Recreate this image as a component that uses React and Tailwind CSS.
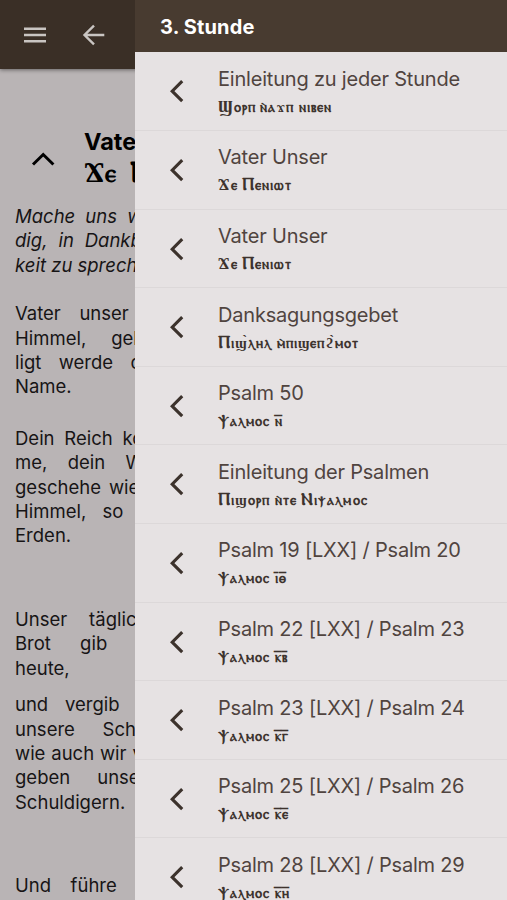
const prayers = [
  { title: "Einleitung zu jeder Stunde", coptic: "Ϣⲟⲣⲡ ⲛ̀ⲁϫⲡ ⲛⲓⲃⲉⲛ" },
  { title: "Vater Unser", coptic: "Ϫⲉ Ⲡⲉⲛⲓⲱⲧ" },
  { title: "Vater Unser", coptic: "Ϫⲉ Ⲡⲉⲛⲓⲱⲧ" },
  { title: "Danksagungsgebet", coptic: "Ⲡⲓϣ̀ⲗⲏⲗ ⲙ̀ⲡⲓϣⲉⲡϩ̀ⲙⲟⲧ" },
  { title: "Psalm 50", coptic: "Ⲯⲁⲗⲙⲟⲥ ⲛ̅" },
  { title: "Einleitung der Psalmen", coptic: "Ⲡⲓϣⲟⲣⲡ ⲛ̀ⲧⲉ Ⲛⲓⲯⲁⲗⲙⲟⲥ" },
  { title: "Psalm 19 [LXX] / Psalm 20", coptic: "Ⲯⲁⲗⲙⲟⲥ ⲓ̅ⲑ̅" },
  { title: "Psalm 22 [LXX] / Psalm 23", coptic: "Ⲯⲁⲗⲙⲟⲥ ⲕ̅ⲃ̅" },
  { title: "Psalm 23 [LXX] / Psalm 24", coptic: "Ⲯⲁⲗⲙⲟⲥ ⲕ̅ⲅ̅" },
  { title: "Psalm 25 [LXX] / Psalm 26", coptic: "Ⲯⲁⲗⲙⲟⲥ ⲕ̅ⲉ̅" },
  { title: "Psalm 28 [LXX] / Psalm 29", coptic: "Ⲯⲁⲗⲙⲟⲥ ⲕ̅ⲏ̅" },
];

// Capitals stand clearly taller than the small letters, psi already has a deep stem
function Coptic({ text }) {
  return text.split(/([ϢϪⲠⲮⲚ])/).map((part, i) =>
    i % 2 === 1 ? (
      <span key={i} className={part === "Ⲯ" ? "text-[1.05em] leading-none" : "text-[1.2em] leading-none"}>
        {part}
      </span>
    ) : (
      part
    )
  );
}

// The last line of a verse keeps its natural word spacing
function Verse({ lines, className = "", justifyLast = false }) {
  return (
    <p className={`w-[153px] text-[18.5px] leading-[24.4px] ${className}`}>
      {lines.map((line, i) => (
        <span
          key={i}
          className={
            i < lines.length - 1 || justifyLast
              ? "block whitespace-nowrap [text-align-last:justify]"
              : "block whitespace-nowrap"
          }
        >
          {line}
        </span>
      ))}
    </p>
  );
}

function MenuIcon() {
  return (
    <svg width="24" height="20" viewBox="0 0 24 20" fill="none" stroke="currentColor" strokeWidth="2.4">
      <path d="M1 3.7h22M1 10h22M1 16.3h22" />
    </svg>
  );
}

function BackIcon() {
  return (
    <svg width="24" height="22" viewBox="0 0 24 22" fill="none" stroke="currentColor" strokeWidth="2.4">
      <path d="M22.3 11H2.5M12 1.6L2.5 11l9.5 9.4" />
    </svg>
  );
}

function PrayerRow({ title, coptic }) {
  return (
    <li className="flex h-[78.6px] shrink-0 border-b border-[#dcd8d9] pl-[34px]">
      <svg
        width="16"
        height="24"
        viewBox="0 0 16 24"
        fill="none"
        stroke="#3c322c"
        strokeWidth="3.1"
        className="mt-[27px] shrink-0"
      >
        <path d="M13.2 2.2L3.2 12.2l10 10" />
      </svg>
      <div className="ml-[33px] pt-[11.5px] whitespace-nowrap">
        <div className="text-[20px] leading-[30px] tracking-[-0.2px]">{title}</div>
        <div className="mt-[3px] text-[14px] leading-[22px] font-bold tracking-[1.05px] text-[#3d332e] font-['Liberation_Serif','DejaVu_Serif',serif]">
          <Coptic text={coptic} />
        </div>
      </div>
    </li>
  );
}

export default function App() {
  return (
    <div className="relative h-[900px] w-[507px] overflow-hidden bg-[#b9b4b5] font-['Inter',sans-serif]">
      <header className="flex h-[69px] items-center bg-[#3a2f26] pl-[23px] text-[#c9c5c2] shadow-[0_1px_4px_rgba(0,0,0,0.45)]">
        <MenuIcon />
        <span className="ml-[35px]">
          <BackIcon />
        </span>
      </header>

      <main className="pl-[15px] text-[#171415]">
        <div className="flex h-[135px] pt-[58px] pl-[16px] text-black">
          <svg
            width="24"
            height="16"
            viewBox="0 0 24 16"
            fill="none"
            stroke="currentColor"
            strokeWidth="3"
            className="mt-[24px] shrink-0"
          >
            <path d="M2 13.5L12.2 3.5l10.2 10" />
          </svg>
          <h1 className="ml-[29px] text-[23.5px] leading-[30px] font-bold whitespace-nowrap">
            Vater Unser
            <span className="block text-[25px] leading-[32px] tracking-[1px] [word-spacing:5px] font-['Liberation_Serif','DejaVu_Serif',serif]">
              <Coptic text="Ϫⲉ Ⲡⲉⲛⲓⲱⲧ" />
            </span>
          </h1>
        </div>

        <Verse className="italic" lines={["Mache uns wür-", "dig, in Dankbar-", "keit zu sprechen:"]} />
        <Verse className="mt-6" lines={["Vater unser im", "Himmel, gehei-", "ligt werde dein", "Name."]} />
        <Verse
          className="mt-[27px]"
          lines={["Dein Reich kom-", "me, dein Wille", "geschehe wie im", "Himmel, so auf", "Erden."]}
        />
        <Verse className="mt-[59px]" lines={["Unser tägliches", "Brot gib uns", "heute,"]} />
        <Verse
          className="mt-3"
          lines={["und vergib uns", "unsere Schuld,", "wie auch wir ver-", "geben unseren", "Schuldigern."]}
        />
        <Verse className="mt-[59px]" lines={["Und führe uns"]} justifyLast />
      </main>

      {/* Drawer over the prayer text */}
      <aside className="absolute inset-y-0 right-0 flex w-[372px] flex-col overflow-hidden bg-[#e6e2e3] text-[#50443f]">
        <header className="h-[52.4px] shrink-0 bg-[#483b30] pt-[12px] pl-[25px] text-[20px] leading-[30px] font-bold tracking-[0.15px] text-white">
          3. Stunde
        </header>
        <ul className="flex flex-col">
          {prayers.map((prayer, i) => (
            <PrayerRow key={i} {...prayer} />
          ))}
        </ul>
      </aside>
    </div>
  );
}
